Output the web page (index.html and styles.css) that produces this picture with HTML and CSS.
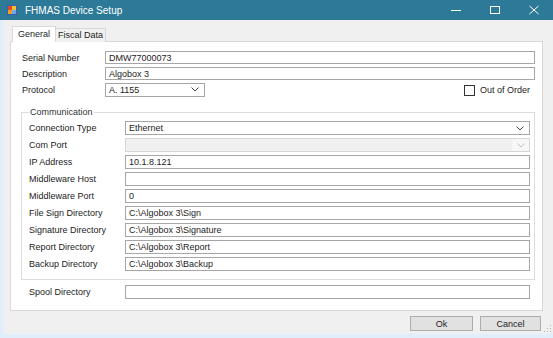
FILE: index.html
```html
<!DOCTYPE html>
<html lang="en">

<head>
    <meta charset="UTF-8">
    <title>FHMAS Device Setup</title>
    <link rel="stylesheet" href="styles.css">
</head>

<body>

    <div class="window">
        <div class="titlebar">
            <svg class="app-icon" viewBox="0 0 10 10">
                <rect x="0" y="0" width="10" height="10" fill="#3a5fb0"/>
                <rect x="1" y="1" width="4" height="4" fill="#e04a2a"/>
                <rect x="5" y="1" width="4" height="4" fill="#f2c230"/>
                <rect x="1" y="5" width="4" height="4" fill="#f0a020"/>
                <rect x="5" y="5" width="4" height="4" fill="#6fa8e8"/>
            </svg>
            <span class="title">FHMAS Device Setup</span>
            <div class="controls">
                <div class="ctl">
                    <svg width="10" height="10" viewBox="0 0 10 10"><path d="M0 5.5H10" stroke="#fff" stroke-width="1"/></svg>
                </div>
                <div class="ctl">
                    <svg width="10" height="10" viewBox="0 0 10 10"><rect x="0.5" y="1.5" width="9" height="7" fill="none" stroke="#fff" stroke-width="1"/></svg>
                </div>
                <div class="ctl">
                    <svg width="10" height="10" viewBox="0 0 10 10"><path d="M0.5 1L9.5 9M9.5 1L0.5 9" stroke="#fff" stroke-width="1"/></svg>
                </div>
            </div>
        </div>

        <div class="client">
            <div class="tabs">
                <div class="tab active">General</div>
                <div class="tab">Fiscal Data</div>
            </div>

            <div class="tab-page">
                <div class="top-form">
                    <span class="lbl">Serial Number</span>
                    <div class="field">DMW77000073</div>

                    <span class="lbl">Description</span>
                    <div class="field">Algobox 3</div>

                    <span class="lbl">Protocol</span>
                    <div class="proto-row">
                        <div class="field combo proto">
                            <span>A. 1155</span>
                            <svg class="chev" viewBox="0 0 8 5"><path d="M0.5 0.5L4 4L7.5 0.5" fill="none" stroke="#444" stroke-width="1"/></svg>
                        </div>
                        <label class="check">
                            <span class="box"></span>
                            Out of Order
                        </label>
                    </div>
                </div>

                <fieldset class="group">
                    <legend>Communication</legend>
                    <div class="group-form">
                        <span class="lbl">Connection Type</span>
                        <div class="field combo">
                            <span>Ethernet</span>
                            <svg class="chev" viewBox="0 0 8 5"><path d="M0.5 0.5L4 4L7.5 0.5" fill="none" stroke="#444" stroke-width="1"/></svg>
                        </div>

                        <span class="lbl">Com Port</span>
                        <div class="field combo disabled">
                            <span></span>
                            <div class="drop">
                                <svg class="chev" viewBox="0 0 8 5"><path d="M0.5 0.5L4 4L7.5 0.5" fill="none" stroke="#bdbdbd" stroke-width="1"/></svg>
                            </div>
                        </div>

                        <span class="lbl">IP Address</span>
                        <div class="field">10.1.8.121</div>

                        <span class="lbl">Middleware Host</span>
                        <div class="field"></div>

                        <span class="lbl">Middleware Port</span>
                        <div class="field">0</div>

                        <span class="lbl">File Sign Directory</span>
                        <div class="field">C:\Algobox 3\Sign</div>

                        <span class="lbl">Signature Directory</span>
                        <div class="field">C:\Algobox 3\Signature</div>

                        <span class="lbl">Report Directory</span>
                        <div class="field">C:\Algobox 3\Report</div>

                        <span class="lbl">Backup Directory</span>
                        <div class="field">C:\Algobox 3\Backup</div>
                    </div>
                </fieldset>

                <div class="spool-form">
                    <span class="lbl">Spool Directory</span>
                    <div class="field"></div>
                </div>
            </div>

            <div class="buttons">
                <button class="btn ok">Ok</button>
                <button class="btn cancel">Cancel</button>
            </div>

            <svg class="grip" width="8" height="8" viewBox="0 0 8 8">
                <rect x="6" y="0" width="1" height="1" fill="#b0b0b0"/>
                <rect x="3" y="3" width="1" height="1" fill="#b0b0b0"/>
                <rect x="6" y="3" width="1" height="1" fill="#b0b0b0"/>
                <rect x="0" y="6" width="1" height="1" fill="#b0b0b0"/>
                <rect x="3" y="6" width="1" height="1" fill="#b0b0b0"/>
                <rect x="6" y="6" width="1" height="1" fill="#b0b0b0"/>
            </svg>
        </div>
    </div>

</body>

</html>
```

FILE: styles.css
```css
* {
    margin: 0;
    padding: 0;
    box-sizing: border-box;
}

body {
    font-family: "Liberation Sans", Arial, sans-serif;
    font-size: 9px;
    color: #1c1c1c;
    background: #dfeefa;
}

.window {
    width: 553px;
    height: 338px;
    display: flex;
    flex-direction: column;
    background: #dfeefa;
    overflow: hidden;
}

/* title bar */
.titlebar {
    height: 20px;
    flex-shrink: 0;
    display: flex;
    align-items: center;
    background: #2c7a98;
    color: #fff;
}

.app-icon {
    width: 10px;
    height: 10px;
    margin-left: 7px;
}

.title {
    margin-left: 8px;
    font-size: 10px;
}

.controls {
    margin-left: auto;
    display: flex;
}

.ctl {
    width: 39px;
    height: 20px;
    display: flex;
    align-items: center;
    justify-content: center;
}

/* client area */
.client {
    flex: 1;
    margin: 0 0 4px 3px;
    padding: 6px 10px 0 7px;
    background: #f0f0f0;
    display: flex;
    flex-direction: column;
    position: relative;
}

.tabs {
    display: flex;
    align-items: flex-end;
    height: 16px;
    margin: 0 0 -1px 2px;
    position: relative;
    z-index: 1;
}

.tab {
    height: 14px;
    padding: 0 2px;
    border: 1px solid #d9d9d9;
    border-bottom: none;
    border-left: none;
    background: #f0f0f0;
    line-height: 13px;
}

.tab.active {
    height: 16px;
    padding: 0 5px;
    border-left: 1px solid #d9d9d9;
    background: #fff;
    line-height: 14px;
}

.tab-page {
    height: 270px;
    flex-shrink: 0;
    padding: 9px 7px 0 11px;
    background: #fff;
    border: 1px solid #d9d9d9;
}

/* fields */
.lbl {
    white-space: nowrap;
}

.field {
    height: 13px;
    padding-left: 3px;
    display: flex;
    align-items: center;
    background: #fff;
    border: 1px solid #a6a6a6;
    white-space: nowrap;
}

.combo {
    justify-content: space-between;
    padding-right: 5px;
}

.chev {
    width: 8px;
    height: 5px;
}

.combo.disabled {
    background: #f0f0f0;
    border-color: #d6d6d6;
    padding-right: 0;
}

.drop {
    width: 17px;
    height: 100%;
    background: #f7f7f7;
    display: flex;
    align-items: center;
    justify-content: center;
}

.top-form {
    display: grid;
    grid-template-columns: 83px 1fr;
    grid-auto-rows: 13px;
    row-gap: 3px;
    align-items: center;
}

.proto-row {
    height: 14px;
    display: flex;
    align-items: center;
    justify-content: space-between;
}

.proto {
    width: 100px;
    height: 14px;
}

.check {
    display: flex;
    align-items: center;
    gap: 5px;
    margin-right: 5px;
    margin-top: 1px;
}

.box {
    width: 11px;
    height: 11px;
    border: 1px solid #333;
    background: #fff;
}

/* communication group */
.group {
    margin: 11px 0 0 -1px;
    padding: 3px 4px 8px 7px;
    border: 1px solid #dcdcdc;
}

.group legend {
    padding: 0 1px;
    line-height: 11px;
    color: #333;
}

.group-form {
    display: grid;
    grid-template-columns: 96px 1fr;
    grid-auto-rows: 14px;
    row-gap: 3px;
    align-items: center;
}

.group-form .field {
    height: 14px;
}

.spool-form {
    display: grid;
    grid-template-columns: 96px 1fr;
    align-items: center;
    margin: 5px 5px 0 7px;
}

.spool-form .field {
    height: 14px;
}

/* dialog buttons */
.buttons {
    display: flex;
    justify-content: flex-end;
    gap: 7px;
    margin: 5px 2px 0 0;
}

.btn {
    height: 15px;
    font-family: inherit;
    font-size: 9px;
    color: #1c1c1c;
    background: #e1e1e1;
    border: 1px solid #adadad;
}

.ok {
    width: 63px;
}

.cancel {
    width: 61px;
}

.grip {
    position: absolute;
    right: 1px;
    bottom: 1px;
}
```
